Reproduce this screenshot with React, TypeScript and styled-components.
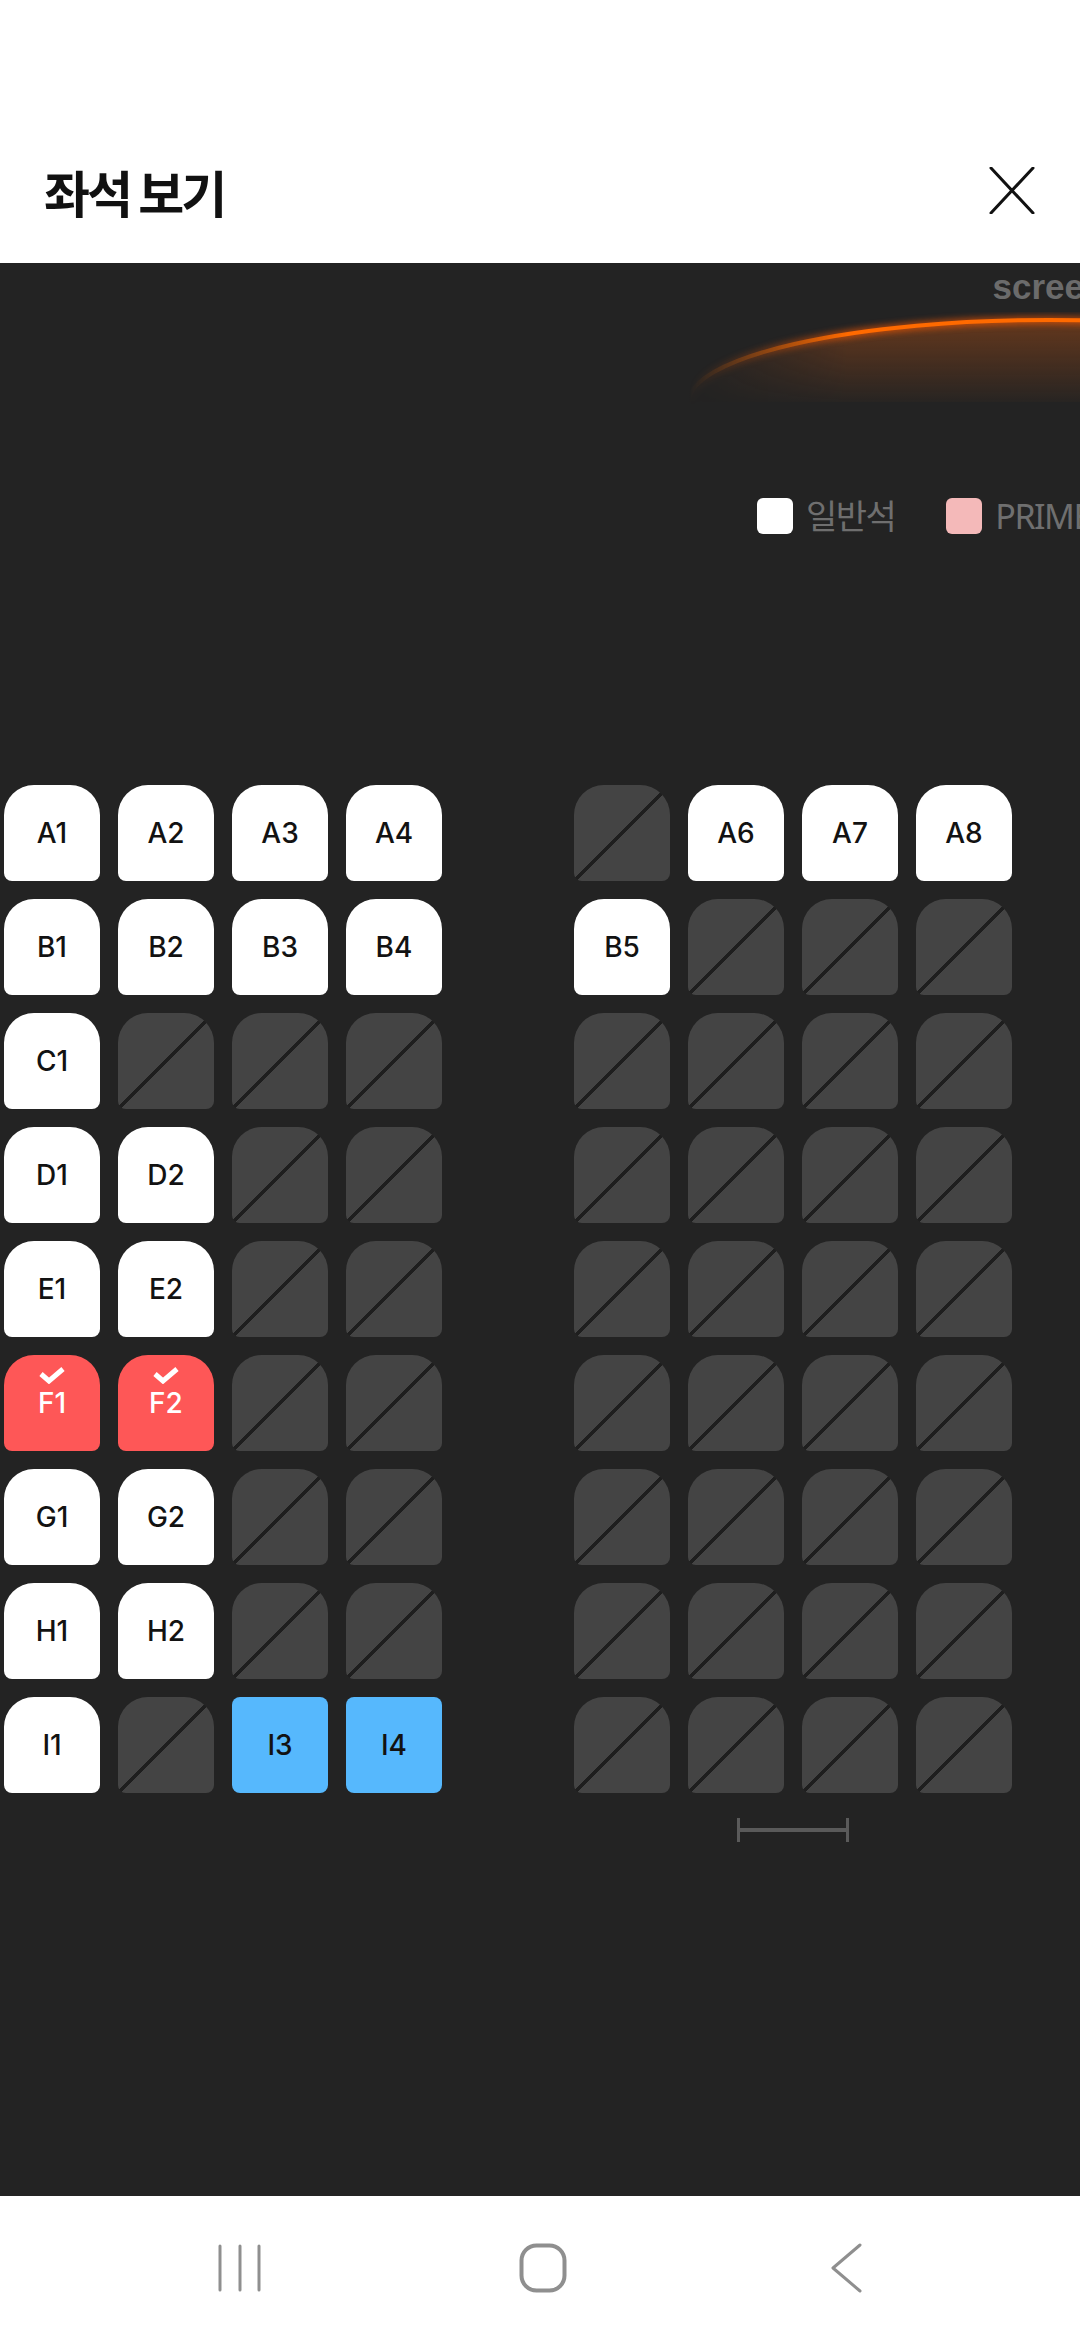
import React from "react";
import styled, { createGlobalStyle, css } from "styled-components";

type SeatKind = "open" | "taken" | "selected" | "special";

interface SeatData {
  label: string;
  kind: SeatKind;
}

const seat = (label: string, kind: SeatKind = "open"): SeatData => ({ label, kind });
const x = (): SeatData => ({ label: "", kind: "taken" });

// each row: left block + right block, 4 seats each
const ROWS: SeatData[][][] = [
  [[seat("A1"), seat("A2"), seat("A3"), seat("A4")], [x(), seat("A6"), seat("A7"), seat("A8")]],
  [[seat("B1"), seat("B2"), seat("B3"), seat("B4")], [seat("B5"), x(), x(), x()]],
  [[seat("C1"), x(), x(), x()], [x(), x(), x(), x()]],
  [[seat("D1"), seat("D2"), x(), x()], [x(), x(), x(), x()]],
  [[seat("E1"), seat("E2"), x(), x()], [x(), x(), x(), x()]],
  [[seat("F1", "selected"), seat("F2", "selected"), x(), x()], [x(), x(), x(), x()]],
  [[seat("G1"), seat("G2"), x(), x()], [x(), x(), x(), x()]],
  [[seat("H1"), seat("H2"), x(), x()], [x(), x(), x(), x()]],
  [[seat("I1"), x(), seat("I3", "special"), seat("I4", "special")], [x(), x(), x(), x()]],
];

const GlobalStyle = createGlobalStyle`
  html, body {
    margin: 0;
    padding: 0;
    background: #ffffff;
  }
  #root {
    width: 1080px;
  }
`;

const App = () => {
  return (
    <>
      <GlobalStyle />
      <Page>
        <StatusSpace />
        <Header>
          <Title>좌석 보기</Title>
          <CloseButton aria-label="close">
            <svg width="46" height="47" viewBox="0 0 46 47">
              <path d="M2 1 L44 46 M44 1 L2 46" stroke="#111" strokeWidth="3" strokeLinecap="round" fill="none" />
            </svg>
          </CloseButton>
        </Header>

        <Stage>
          <Screen>
            <ScreenLabel>screen</ScreenLabel>
            <svg width="720" height="159" viewBox="0 0 720 159">
              <defs>
                <linearGradient id="glowFill" x1="0" y1="16" x2="0" y2="105" gradientUnits="userSpaceOnUse">
                  <stop offset="0" stopColor="#ff6a10" stopOpacity="0.3" />
                  <stop offset="1" stopColor="#ff6a10" stopOpacity="0" />
                </linearGradient>
                <linearGradient id="fadeX" x1="0" y1="0" x2="720" y2="0" gradientUnits="userSpaceOnUse">
                  <stop offset="0" stopColor="#fff" stopOpacity="0" />
                  <stop offset="0.22" stopColor="#fff" stopOpacity="1" />
                  <stop offset="1" stopColor="#fff" stopOpacity="1" />
                </linearGradient>
                <mask id="arcMask">
                  <rect x="0" y="0" width="720" height="159" fill="url(#fadeX)" />
                </mask>
                <filter id="blur" x="-10%" y="-50%" width="120%" height="200%">
                  <feGaussianBlur stdDeviation="3" />
                </filter>
              </defs>
              <g mask="url(#arcMask)">
                <path d="M0 98 A360 82 0 0 1 720 98 Z" fill="url(#glowFill)" />
                <path d="M0 98 A360 82 0 0 1 720 98" stroke="#ff5a00" strokeWidth="8" fill="none" filter="url(#blur)" opacity="0.6" />
                <path d="M0 98 A360 82 0 0 1 720 98" stroke="#ff6a00" strokeWidth="4" fill="none" />
              </g>
            </svg>
          </Screen>

          <Legend>
            <LegendItem>
              <Swatch $color="#ffffff" />
              <LegendText>일반석</LegendText>
            </LegendItem>
            <LegendItem>
              <Swatch $color="#f4b9b9" />
              <LegendText>PRIME</LegendText>
            </LegendItem>
          </Legend>

          <SeatMap>
            {ROWS.map((row, i) => (
              <SeatRow key={i}>
                {row.map((block, j) => (
                  <Block key={j}>
                    {block.map((s, k) => (
                      <Seat key={k} $kind={s.kind}>
                        {s.kind === "selected" && (
                          <svg width="28" height="18" viewBox="0 0 28 18">
                            <path d="M3 8 L11 15 L25 3" stroke="#fff" strokeWidth="5" fill="none" strokeLinejoin="miter" />
                          </svg>
                        )}
                        {s.label && <SeatLabel $kind={s.kind}>{s.label}</SeatLabel>}
                      </Seat>
                    ))}
                  </Block>
                ))}
              </SeatRow>
            ))}
          </SeatMap>

          <ScaleBar />
        </Stage>

        <NavBar>
          <NavButton aria-label="recents">
            <svg width="46" height="48" viewBox="0 0 46 48">
              <path d="M3 2 V46 M23 2 V46 M42 2 V46" stroke="#8f8f8f" strokeWidth="3" strokeLinecap="round" />
            </svg>
          </NavButton>
          <NavButton aria-label="home">
            <svg width="48" height="50" viewBox="0 0 48 50">
              <rect x="2.5" y="2.5" width="43" height="45" rx="15" stroke="#8f8f8f" strokeWidth="4" fill="none" />
            </svg>
          </NavButton>
          <NavButton aria-label="back">
            <svg width="34" height="50" viewBox="0 0 34 50">
              <path d="M31 2 L4 25 L31 48" stroke="#8f8f8f" strokeWidth="3" strokeLinecap="round" strokeLinejoin="round" fill="none" />
            </svg>
          </NavButton>
        </NavBar>
      </Page>
    </>
  );
};

const Page = styled.div`
  width: 1080px;
  height: 2340px;
  display: flex;
  flex-direction: column;
  background: #ffffff;
  overflow: hidden;
`;

const StatusSpace = styled.div`
  height: 118px;
  flex-shrink: 0;
`;

const Header = styled.div`
  height: 145px;
  flex-shrink: 0;
  display: flex;
  align-items: center;
  justify-content: space-between;
  padding: 0 45px 0 44px;
  box-sizing: border-box;
`;

const Title = styled.h1`
  margin: 0;
  font-family: "Noto Sans CJK KR", "Noto Sans", sans-serif;
  font-size: 50px;
  font-weight: 700;
  letter-spacing: -3px;
  color: #111111;
  line-height: 1;
`;

const CloseButton = styled.div`
  display: flex;
  align-items: center;
  justify-content: center;
  width: 46px;
  height: 47px;
`;

const Stage = styled.div`
  height: 1933px;
  flex-shrink: 0;
  background: #232323;
  overflow: hidden;
`;

const Screen = styled.div`
  margin-left: 689px;
  width: 720px;
  display: flex;
  flex-direction: column;
  align-items: center;

  svg {
    display: block;
  }
`;

const ScreenLabel = styled.div`
  margin-top: 6px;
  font-family: "Liberation Sans", Arial, sans-serif;
  font-weight: 700;
  font-size: 35px;
  line-height: 35px;
  color: #6b6b6b;
`;

const Legend = styled.div`
  margin: 35px 0 0 757px;
  width: max-content;
  display: flex;
  align-items: center;
  gap: 51px;
`;

const LegendItem = styled.div`
  display: flex;
  align-items: center;
  gap: 13px;
`;

const Swatch = styled.div<{ $color: string }>`
  width: 36px;
  height: 36px;
  border-radius: 6px;
  background: ${(p) => p.$color};
`;

const LegendText = styled.span`
  font-family: "Noto Sans", "Noto Sans CJK KR", sans-serif;
  font-size: 34px;
  line-height: 36px;
  letter-spacing: -1.5px;
  color: #6f6f6f;
`;

const SeatMap = styled.div`
  margin-top: 251px;
  padding-left: 4px;
  display: flex;
  flex-direction: column;
  gap: 18px;
`;

const SeatRow = styled.div`
  display: flex;
  gap: 132px;
`;

const Block = styled.div`
  display: flex;
  gap: 18px;
`;

const seatKinds = {
  open: css`
    background: #ffffff;
  `,
  taken: css`
    background: linear-gradient(
      to bottom right,
      #444444 calc(50% - 1.5px),
      #1e1e1e calc(50% - 1.5px),
      #1e1e1e calc(50% + 1.5px),
      #444444 calc(50% + 1.5px)
    );
  `,
  selected: css`
    background: #fe5757;
    padding-bottom: 23px;
    gap: 5px;
  `,
  special: css`
    background: #56b8fd;
    border-radius: 8px;
  `,
};

const Seat = styled.div<{ $kind: SeatKind }>`
  width: 96px;
  height: 96px;
  box-sizing: border-box;
  border-radius: 30px 30px 8px 8px;
  display: flex;
  flex-direction: column;
  align-items: center;
  justify-content: center;
  ${(p) => seatKinds[p.$kind]}

  svg {
    display: block;
  }
`;

const SeatLabel = styled.span<{ $kind: SeatKind }>`
  font-family: Inter, "Noto Sans", sans-serif;
  font-size: 28px;
  font-weight: 500;
  line-height: 28px;
  color: ${(p) => (p.$kind === "selected" ? "#ffffff" : "#121212")};
`;

const ScaleBar = styled.div`
  margin: 25px 0 0 737px;
  width: 112px;
  height: 24px;
  box-sizing: border-box;
  border-left: 3px solid #5a5a5a;
  border-right: 3px solid #5a5a5a;
  display: flex;
  align-items: center;

  &::before {
    content: "";
    flex: 1;
    height: 4px;
    background: #5a5a5a;
  }
`;

const NavBar = styled.div`
  flex: 1;
  display: flex;
  align-items: center;
  justify-content: center;
  gap: 203px;
  padding-left: 6px;
  background: #ffffff;
`;

const NavButton = styled.div`
  width: 100px;
  display: flex;
  justify-content: center;
  align-items: center;
`;

export default App;
